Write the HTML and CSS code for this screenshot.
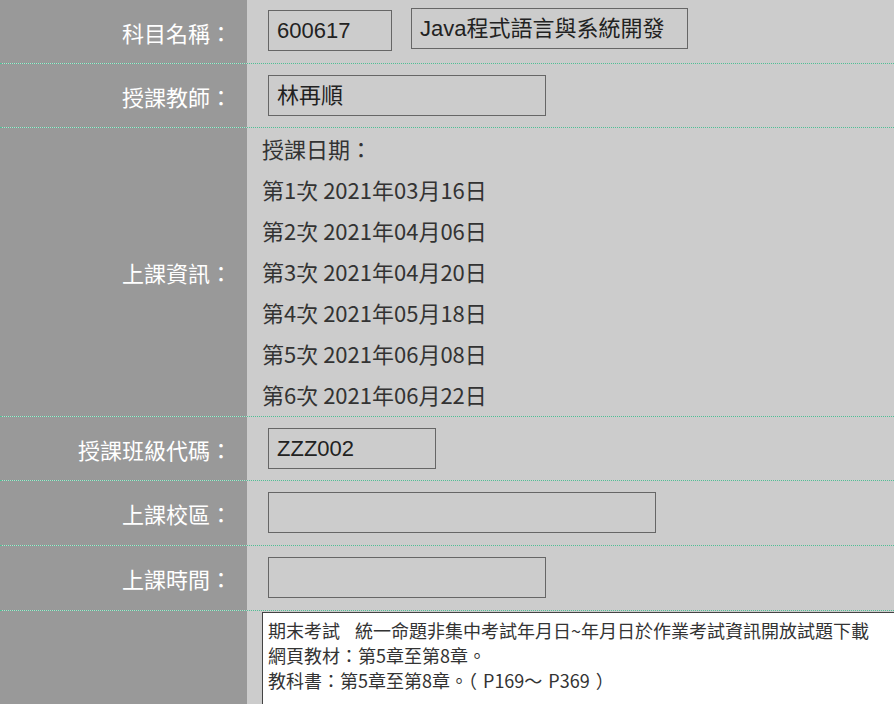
FILE: index.html
```html
<!DOCTYPE html>
<html lang="zh-Hant">
<head>
<meta charset="utf-8">
<title>課程資訊</title>
<link rel="stylesheet" href="styles.css">
</head>
<body>
<div class="form">
  <div class="row first">
    <div class="label">科目名稱：</div>
    <div class="field">
      <div class="box w-code">600617</div>
      <div class="box w-name raised">Java程式語言與系統開發</div>
    </div>
  </div>
  <div class="row">
    <div class="label">授課教師：</div>
    <div class="field">
      <div class="box w-mid">林再順</div>
    </div>
  </div>
  <div class="row">
    <div class="label">上課資訊：</div>
    <div class="field dates">
      <div class="line">授課日期：</div>
      <div class="line">第1次 2021年03月16日</div>
      <div class="line">第2次 2021年04月06日</div>
      <div class="line">第3次 2021年04月20日</div>
      <div class="line">第4次 2021年05月18日</div>
      <div class="line">第5次 2021年06月08日</div>
      <div class="line">第6次 2021年06月22日</div>
    </div>
  </div>
  <div class="row">
    <div class="label">授課班級代碼：</div>
    <div class="field">
      <div class="box w-class">ZZZ002</div>
    </div>
  </div>
  <div class="row tall">
    <div class="label">上課校區：</div>
    <div class="field">
      <div class="box w-wide"></div>
    </div>
  </div>
  <div class="row tall">
    <div class="label">上課時間：</div>
    <div class="field">
      <div class="box w-mid"></div>
    </div>
  </div>
  <div class="row last">
    <div class="label"></div>
    <div class="field notes-wrap">
      <div class="notes">期末考試<span class="gap"></span>統一命題非集中考試年月日~年月日於作業考試資訊開放試題下載<br>網頁教材：第5章至第8章。<br>教科書：第5章至第8章。（<span class="gap-s"></span>P169～<span class="gap-s"></span>P369<span class="gap-s"></span>）</div>
    </div>
  </div>
</div>
</body>
</html>
```

FILE: styles.css
```css
html, body {
  margin: 0;
  padding: 0;
  overflow: hidden;
  background: #cccccc;
}

.form {
  width: 894px;
  font-family: "Noto Sans CJK TC", sans-serif;
}

.row {
  display: grid;
  grid-template-columns: 247px 1fr;
  border-bottom: 1px dotted #4fbf95;
}

.label {
  background: #999999;
  color: #ffffff;
  font-size: 22px;
  display: flex;
  align-items: center;
  justify-content: flex-end;
  padding-right: 15px;
}

.field {
  background: #cccccc;
  display: flex;
  align-items: flex-start;
  gap: 19px;
  padding: 11px 0 11px 21px;
}

.first .field {
  padding-top: 10px;
  padding-bottom: 12px;
}

.tall .field {
  padding-bottom: 12px;
}

.box {
  box-sizing: border-box;
  height: 41px;
  border: 1px solid #666666;
  padding: 0 8px;
  font-family: "Liberation Sans", "Noto Sans CJK TC", sans-serif;
  font-size: 22px;
  line-height: 39px;
  color: #222222;
  white-space: nowrap;
  overflow: hidden;
}

.raised {
  margin-top: -2px;
}

.w-code { width: 124px; }
.w-name { width: 277px; }
.w-mid { width: 278px; }
.w-class { width: 168px; }
.w-wide { width: 388px; }

.dates {
  display: block;
  padding: 0 0 1px 15px;
}

.line {
  font-size: 22px;
  line-height: 41px;
  color: #333333;
}

.last {
  border-bottom: none;
  height: 120px;
}

.notes-wrap {
  display: block;
  padding: 1px 0 0 15px;
  overflow: hidden;
}

.notes {
  width: 700px;
  height: 140px;
  box-sizing: border-box;
  background: #ffffff;
  border: 1px solid #444444;
  padding: 5px 5px;
  font-size: 18px;
  line-height: 25px;
  color: #333333;
  white-space: nowrap;
}

.gap {
  display: inline-block;
  width: 15px;
}

.gap-s {
  display: inline-block;
  width: 6px;
}
```
